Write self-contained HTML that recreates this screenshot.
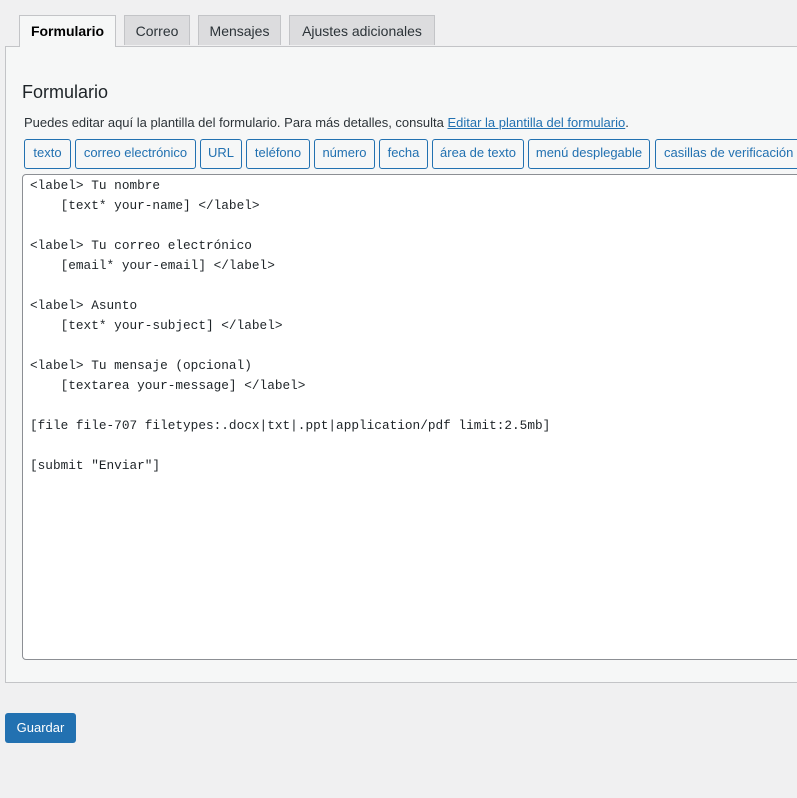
<!DOCTYPE html>
<html><head><meta charset="utf-8"><style>
body{margin:0;width:797px;height:798px;background:#f0f0f1;font-family:"Liberation Sans",sans-serif;color:#1d2327;position:relative;overflow:hidden}
.tab{position:absolute;top:15px;height:30px;border:1px solid #c3c4c7;border-bottom:none;background:#dcdcde;font-size:14px;line-height:30px;text-align:center;color:#2c3338;box-sizing:border-box}
.tab.a{background:#f6f7f7;font-weight:bold;color:#000;height:32px;z-index:2}
.panel{position:absolute;left:5px;top:46px;width:800px;height:637px;border:1px solid #c3c4c7;background:#f6f7f7;box-sizing:border-box}
h2{position:absolute;left:22px;top:82px;margin:0;font-size:18px;font-weight:normal;color:#1d2327}
.desc{position:absolute;left:24px;top:115px;font-size:13px;color:#2c3338}
.desc a{color:#2271b1;text-decoration:underline}
.b{position:absolute;top:139px;height:30px;border:1px solid #2271b1;border-radius:3px;background:#f6f7f7;color:#2271b1;font-size:13px;line-height:26px;text-align:center;box-sizing:border-box}
.ta{position:absolute;left:22px;top:174px;width:800px;height:486px;border:1px solid #8c8f94;border-radius:4px;background:#fff;box-sizing:border-box}
pre{margin:0;position:absolute;left:30px;top:176px;font-family:"Liberation Mono",monospace;font-size:12.75px;line-height:20px;color:#1d2327}
.g{position:absolute;left:5px;top:713px;width:71px;height:30px;background:#2271b1;border-radius:3px;color:#fff;font-size:13px;line-height:30px;text-align:center}
</style></head><body>
<div class="panel"></div>
<div class="tab a" style="left:19px;width:97px">Formulario</div>
<div class="tab" style="left:124px;width:66px">Correo</div>
<div class="tab" style="left:198px;width:83px">Mensajes</div>
<div class="tab" style="left:289px;width:146px">Ajustes adicionales</div>
<h2>Formulario</h2>
<div class="desc">Puedes editar aquí la plantilla del formulario. Para más detalles, consulta <a>Editar la plantilla del formulario</a>.</div>
<div class="b" style="left:24px;width:47px">texto</div>
<div class="b" style="left:75px;width:121px">correo electrónico</div>
<div class="b" style="left:200px;width:42px">URL</div>
<div class="b" style="left:246px;width:64px">teléfono</div>
<div class="b" style="left:314px;width:61px">número</div>
<div class="b" style="left:379px;width:49px">fecha</div>
<div class="b" style="left:432px;width:92px">área de texto</div>
<div class="b" style="left:528px;width:122px">menú desplegable</div>
<div class="b" style="left:655px;width:145px;text-align:left;padding-left:8px">casillas de verificación</div>
<div class="ta"></div>
<pre>&lt;label&gt; Tu nombre
    [text* your-name] &lt;/label&gt;

&lt;label&gt; Tu correo electrónico
    [email* your-email] &lt;/label&gt;

&lt;label&gt; Asunto
    [text* your-subject] &lt;/label&gt;

&lt;label&gt; Tu mensaje (opcional)
    [textarea your-message] &lt;/label&gt;

[file file-707 filetypes:.docx|txt|.ppt|application/pdf limit:2.5mb]

[submit "Enviar"]</pre>
<div class="g">Guardar</div>
</body></html>
